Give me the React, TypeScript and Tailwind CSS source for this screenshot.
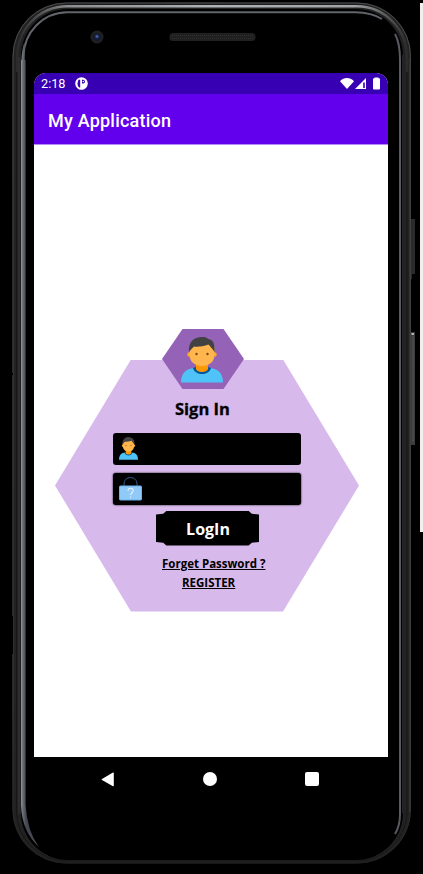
import React from "react";

function DeviceFrame() {
  return (
    <svg className="absolute inset-0" width="423" height="874" viewBox="0 0 423 874" fill="none" aria-hidden="true">
      <defs>
        <linearGradient id="rim" x1="0" y1="0" x2="0" y2="874" gradientUnits="userSpaceOnUse">
          <stop offset="0" stopColor="#4a4b4d" />
          <stop offset="0.1" stopColor="#484848" />
          <stop offset="0.8" stopColor="#3c3c3c" />
          <stop offset="0.96" stopColor="#262626" />
          <stop offset="1" stopColor="#1a1a1a" />
        </linearGradient>
        <linearGradient id="leftGlint" x1="21" y1="0" x2="26" y2="0" gradientUnits="userSpaceOnUse">
          <stop offset="0" stopColor="#92959b" />
          <stop offset="0.4" stopColor="#666a73" />
          <stop offset="1" stopColor="#454850" />
        </linearGradient>
        <linearGradient id="topGlint" x1="18" y1="0" x2="408" y2="0" gradientUnits="userSpaceOnUse">
          <stop offset="0" stopColor="#2c2c2c" />
          <stop offset="0.05" stopColor="#4c4e50" />
          <stop offset="0.13" stopColor="#8c8e90" />
          <stop offset="0.5" stopColor="#b0b3b5" />
          <stop offset="0.86" stopColor="#a0a2a4" />
          <stop offset="0.95" stopColor="#555" />
          <stop offset="1" stopColor="#2a2a2a" />
        </linearGradient>
      </defs>
      <rect x="12.500" y="2.500" width="398.500" height="861" rx="54" fill="#222" />
      <rect x="13" y="3" width="397.500" height="860" rx="53.500" stroke="url(#rim)" strokeWidth="1" />
      <rect x="16.500" y="5" width="390.500" height="856" rx="50" stroke="#171717" />
      <rect x="21" y="9" width="382" height="851" rx="47" fill="#000" />
      <path d="M17 72V57A50 50.800 0 0 1 67 6.200H357A50 50.800 0 0 1 407 57V72" stroke="url(#topGlint)" strokeWidth="2.400" />
      <path d="M19 57V814" stroke="#383838" />
      <path d="M23.500 62V57A44 44.800 0 0 1 67 12.200H355Q372 12.500 382 19" stroke="#62646b" strokeWidth="2" />
      <path d="M21.500 60Q22 49 24.500 42V60H25.600V805Q27 831 39 847Q22 832 21 805V60Z" fill="url(#leftGlint)" />
      <path d="M395 34Q400 43 400 60V814Q400 826 395 834" stroke="#5b5861" strokeWidth="2" />
      <path d="M402.500 55V813" stroke="#242424" />
      <path d="M410 58V812" stroke="#3d3d3d" strokeWidth="1.200" />
      <path d="M411 219H415V274H412V279H411Z" fill="#2b2b2b" />
      <path d="M411 332H415V445H411Z" fill="#3c3c3c" />
      <path d="M413 336V442" stroke="#555" />
      <path d="M411.500 334H414" stroke="#b4b4b4" strokeWidth="2" />
      <path d="M12.500 373V375M12.500 616V654" stroke="#000" />
      <path d="M165 2.500H223" stroke="#333" />
      <rect x="420" y="3" width="3" height="529" fill="#f0f0ee" />
      <circle cx="97" cy="37" r="6.500" fill="#202020" />
      <circle cx="97" cy="37" r="4" fill="#141b31" />
      <circle cx="97" cy="36.500" r="2" fill="#293e72" />
      <circle cx="97" cy="36.500" r="0.800" fill="#6781b2" />
      <rect x="169.500" y="33" width="86" height="8" rx="3.500" fill="#202020" />
      <path d="M172 35.500H253M172 38.500H253" stroke="#303030" strokeDasharray="1 1" />
    </svg>
  );
}

function Person({ className }: { className: string }) {
  return (
    <svg className={className} viewBox="0 0 42 46" preserveAspectRatio="none" aria-hidden="true">
      <path d="M0 45.500C0 35 6 31.500 14 31h14c8 .5 14 4 14 14.500Z" fill="#4fc3f7" />
      <path d="M12 31c2 8 16 8 18 0l-3-1H15Z" fill="#01579b" />
      <path d="M15 26h12v6c-1 4-11 4-12 0Z" fill="#ff9800" />
      <circle cx="8.500" cy="17.500" r="2.300" fill="#ffa726" />
      <circle cx="33.500" cy="17.500" r="2.300" fill="#ffa726" />
      <path d="M8.500 11C9 5 14 3 21 3s12 2 12.500 8v6.500C33.500 25 28 29 21 29S8.500 25 8.500 17.500Z" fill="#ffb74d" />
      <path d="M8 15C7 5 13 0 21 0c3 0 5 .6 6 2 5 0 7 5 6.600 13l-2.200-3L27.500 7.500C22 9.500 17 10 13 9.500L10.500 12Z" fill="#424242" />
      <circle cx="15.500" cy="17" r="1.200" fill="#784719" />
      <circle cx="26.500" cy="17" r="1.200" fill="#784719" />
    </svg>
  );
}

function Padlock() {
  return (
    <svg className="h-6 w-[23px]" viewBox="0 0 23 24" fill="none" aria-hidden="true">
      <path d="M5 9V7.500C5 3 7.500 .6 11.500 .6S18 3 18 7.500V9" stroke="#345f89" strokeWidth="1" />
      <rect x="0.500" y="9" width="22" height="14" rx="1" fill="#90caf9" stroke="#6fb2ec" />
      <path d="M9 13.700c0-3.200 5.200-3.200 5.200 0 0 2.200-2.600 1.800-2.600 4.300M11.600 19.500v1.300" stroke="#e4f3ff" strokeWidth="1.100" />
    </svg>
  );
}

function StatusBar() {
  return (
    <div className="flex h-[21px] shrink-0 items-center bg-[#3700b3] pl-[7px] pr-[7px] text-white">
      <span className="w-[25px] text-[12.700px] leading-[21px]">2:18</span>
      <svg className="ml-[9px]" width="13" height="13" viewBox="0 0 13 13" aria-hidden="true">
        <circle cx="6.500" cy="6.500" r="6.300" fill="#fff" />
        <path d="M3.400 2.800H5.200V10.600H4.200Q2.500 9 2.500 6.500Z" fill="#3700b3" />
        <path d="M7 2.800H8.200C10.600 3 10.600 6.400 8.200 6.400H7Z" fill="#3700b3" />
        <circle cx="8.300" cy="4.500" r="0.800" fill="#fff" />
      </svg>
      <svg className="ml-auto" width="41" height="13" viewBox="0 0 41 13" aria-hidden="true">
        <path d="M0 4.200C3.800 0 10 0 14 4.200L7 12Z" fill="#fff" />
        <path d="M26 1V12H15Z" fill="#fff" />
        <path d="M23.200 5.500H24.800V11H23.200Z" fill="#3700b3" />
        <path d="M34.500 1.300V.5H38.500V1.300H39Q40 1.300 40 2.300V11.500Q40 12.500 39 12.500H34Q33 12.500 33 11.500V2.300Q33 1.300 34 1.300Z" fill="#fff" />
      </svg>
    </div>
  );
}

function SignInForm() {
  return (
    <div className="ml-[21px] flex w-[304px] flex-col font-['Open_Sans',sans-serif] font-bold text-black">
      <div className="z-10 ml-[107px] flex h-[60px] w-[82px] justify-center bg-[#9462b6] pr-[2px] pt-2 [clip-path:polygon(25%_0,75%_0,100%_50%,75%_100%,25%_100%,0_50%)]">
        <Person className="h-[46px] w-[42px]" />
      </div>
      <form className="-mt-[29.500px] flex h-[252px] flex-col bg-[#d7b9eb] pt-[38.500px] [clip-path:polygon(25%_0,75%_0,100%_50%,75%_100%,25%_100%,0_50%)]" onSubmit={(e) => e.preventDefault()}>
        <h2 className="ml-[120px] text-[16.500px] leading-[22px] [-webkit-text-stroke:0.3px_black]">Sign In</h2>
        <label className="ml-[58px] mt-[12.500px] flex h-8 w-[188px] items-center rounded-[3px] bg-black pl-[6px]">
          <Person className="h-[23px] w-[19px]" />
        </label>
        <label className="ml-[58px] mt-[8.500px] flex h-8 w-[188px] items-center rounded-[3px] bg-black pl-[5.500px] shadow-[0_0_2px_#000]">
          <Padlock />
        </label>
        <button className="ml-[101px] mt-[6px] h-[34.500px] w-[103px] bg-black pl-px pt-px text-base leading-[34px] text-white [clip-path:polygon(10%_0,90%_0,93%_8%,100%_10%,100%_90%,93%_92%,90%_100%,10%_100%,7%_92%,0_90%,0_10%,7%_8%)]">LogIn</button>
        <a className="ml-[107px] mt-[10.500px] w-max text-[11.500px] leading-4 underline decoration-1">Forget Password ?</a>
        <a className="ml-[127px] mt-[3px] w-max text-[11.500px] leading-4 underline decoration-1">REGISTER</a>
      </form>
    </div>
  );
}

function NavigationBar() {
  return (
    <nav className="mx-auto flex h-11 w-[354px] items-center justify-between pl-[67px] pr-[69px]">
      <svg width="13" height="15" viewBox="0 0 13 15"><path d="M1 7L11.500 .8Q12.800 .2 12.800 1.500V13.500Q12.800 14.700 11.500 14L1 8Q0 7.500 1 7Z" fill="#fff" /></svg>
      <span className="ml-px size-[14px] rounded-full bg-white" />
      <span className="size-[14px] rounded-[2px] bg-white" />
    </nav>
  );
}

export default function App() {
  return (
    <div className="relative h-[874px] w-[423px] overflow-hidden bg-black font-['Roboto',sans-serif]">
      <DeviceFrame />
      <div className="relative pl-[34px] pt-[73px]">
        <div className="flex h-[684px] w-[354px] flex-col overflow-hidden rounded-t-[12px] bg-white">
          <StatusBar />
          <header className="flex h-[50px] shrink-0 items-center bg-[#6200ee] pl-[14px] pt-[2px] text-[18px] font-medium tracking-[0.22px] text-white">My Application</header>
          <main className="flex flex-1 flex-col border-t border-[#b98bf4] pt-[184px]">
            <SignInForm />
          </main>
        </div>
      </div>
      <div className="relative w-[422px]"><NavigationBar /></div>
    </div>
  );
}
